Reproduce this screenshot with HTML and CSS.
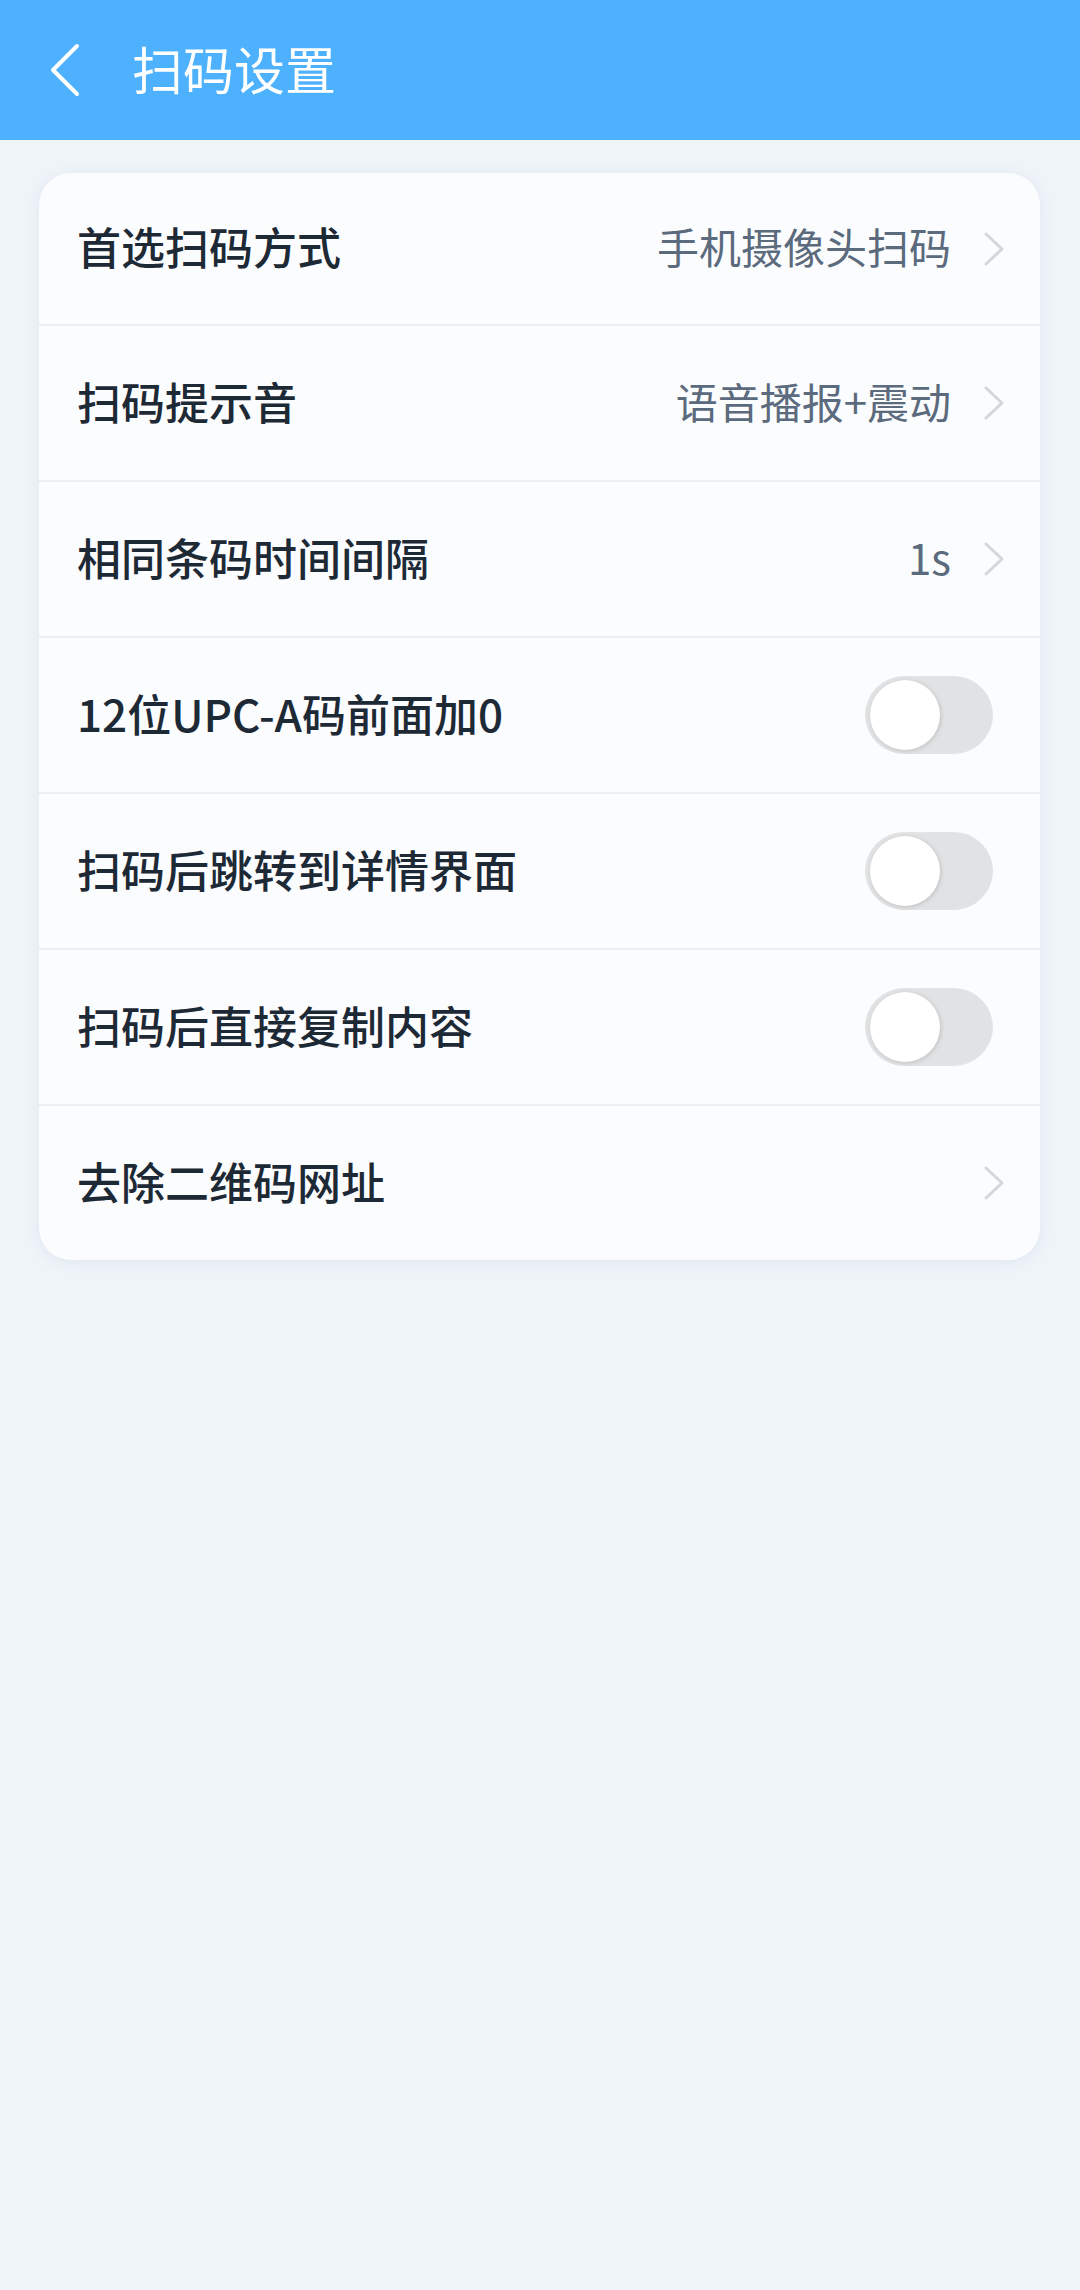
FILE: index.html
```html
<!DOCTYPE html>
<html lang="zh-CN">
<head>
    <meta charset="UTF-8">
    <meta name="viewport" content="width=device-width, initial-scale=1.0">
    <title>扫码设置</title>
    <link rel="stylesheet" href="styles.css">
</head>
<body>

    <!-- Top bar -->
    <div class="topbar">
        <svg class="back" width="32" height="56" viewBox="0 0 32 56">
            <polyline points="28,4 4,28 28,52" fill="none" stroke="#fff" stroke-width="4" stroke-linecap="round" stroke-linejoin="round"/>
        </svg>
        <div class="title">扫码设置</div>
    </div>

    <!-- Settings list -->
    <div class="card">
        <div class="row">
            <span class="label">首选扫码方式</span>
            <span class="value">手机摄像头扫码</span>
            <svg class="arrow" width="24" height="36" viewBox="0 0 24 36"><polyline points="4,3 20,18 4,33" fill="none" stroke="#d3d6da" stroke-width="3" stroke-linecap="round" stroke-linejoin="round"/></svg>
        </div>
        <div class="row">
            <span class="label">扫码提示音</span>
            <span class="value">语音播报+震动</span>
            <svg class="arrow" width="24" height="36" viewBox="0 0 24 36"><polyline points="4,3 20,18 4,33" fill="none" stroke="#d3d6da" stroke-width="3" stroke-linecap="round" stroke-linejoin="round"/></svg>
        </div>
        <div class="row">
            <span class="label">相同条码时间间隔</span>
            <span class="value">1s</span>
            <svg class="arrow" width="24" height="36" viewBox="0 0 24 36"><polyline points="4,3 20,18 4,33" fill="none" stroke="#d3d6da" stroke-width="3" stroke-linecap="round" stroke-linejoin="round"/></svg>
        </div>
        <div class="row">
            <span class="label">12位UPC-A码前面加0</span>
            <span class="switch"><span class="knob"></span></span>
        </div>
        <div class="row">
            <span class="label">扫码后跳转到详情界面</span>
            <span class="switch"><span class="knob"></span></span>
        </div>
        <div class="row">
            <span class="label">扫码后直接复制内容</span>
            <span class="switch"><span class="knob"></span></span>
        </div>
        <div class="row">
            <span class="label">去除二维码网址</span>
            <svg class="arrow" width="24" height="36" viewBox="0 0 24 36"><polyline points="4,3 20,18 4,33" fill="none" stroke="#d3d6da" stroke-width="3" stroke-linecap="round" stroke-linejoin="round"/></svg>
        </div>
    </div>

</body>
</html>
```

FILE: styles.css
```css
body {
    margin: 0;
    font-family: "Noto Sans CJK SC", "Noto Sans", sans-serif;
    background-color: #eff4f9;
    color: #1e2936;
    min-height: 2290px;
}
.topbar {
    height: 140px;
    background-color: #4db1fd;
    display: flex;
    align-items: center;
    padding-left: 49px;
}
.back {
    display: block;
}
.title {
    color: #fff;
    font-size: 51px;
    margin-left: 51px;
    line-height: 1;
    padding-bottom: 3px;
}
.card {
    margin: 33px 40px 0 39px;
    background-color: #fafcfe;
    border-radius: 32px;
    box-shadow: 0 2px 14px rgba(120, 140, 170, 0.12);
    overflow: hidden;
}
.row {
    height: 154px;
    display: flex;
    align-items: center;
    padding: 0 34px 0 38px;
    border-top: 2px solid #ebeff3;
}
.row:first-child {
    border-top: none;
    height: 151px;
}
.label {
    flex: 1;
    font-size: 44px;
    font-weight: 500;
    line-height: 1;
    padding-bottom: 5px;
}
.value {
    font-size: 42px;
    color: #5b6a7c;
    margin-right: 31px;
    line-height: 1;
    padding-bottom: 5px;
}
.arrow {
    display: block;
}
.switch {
    width: 126px;
    height: 76px;
    border: 1px solid #e4e4e4;
    border-radius: 39px;
    background-color: #e1e2e3;
    position: relative;
    margin-right: 13px;
}
.knob {
    position: absolute;
    left: 4px;
    top: 3px;
    width: 70px;
    height: 70px;
    border-radius: 50%;
    background-color: #fff;
    box-shadow: 1px 1px 4px rgba(0, 0, 0, 0.15);
}
```
